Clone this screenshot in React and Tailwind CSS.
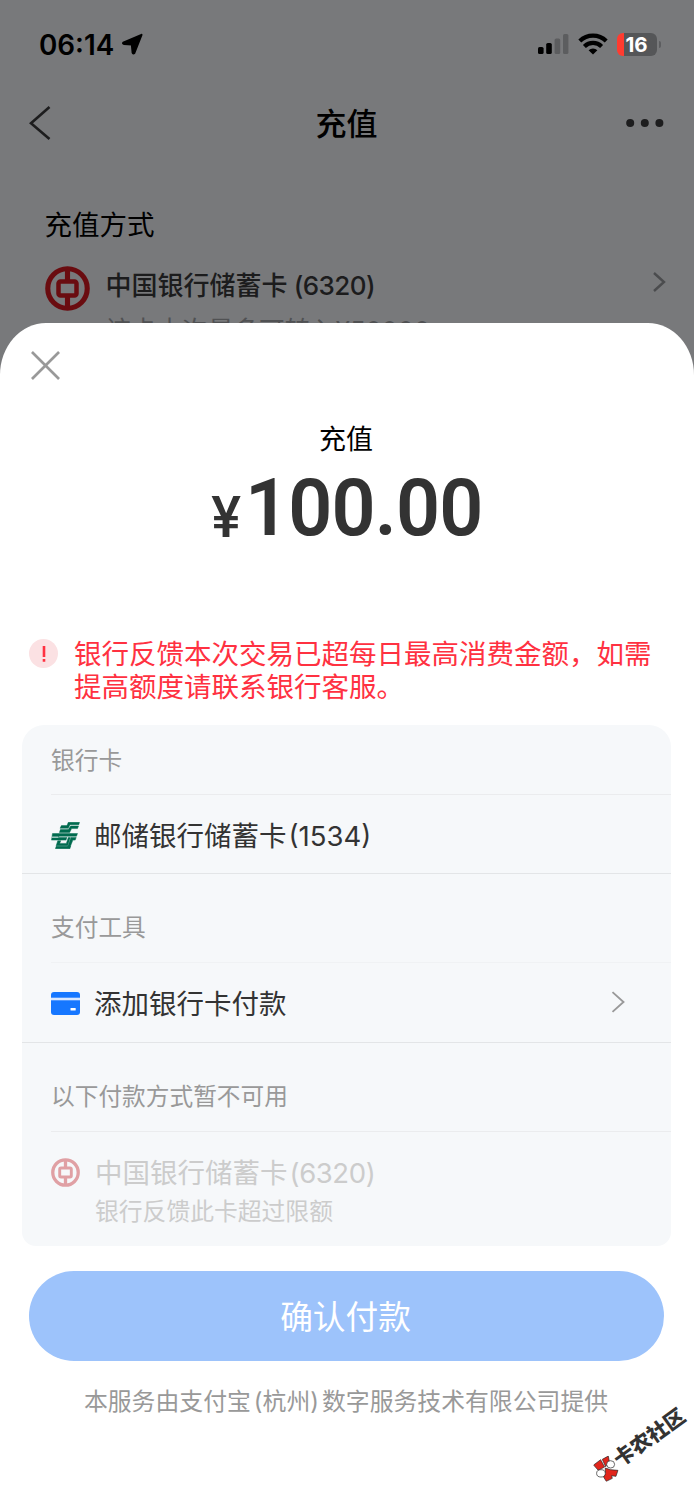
import React from "react";

function BocLogo({ className, color }) {
  return (
    <svg viewBox="0 0 44 44" className={className} fill="none" stroke={color}>
      <circle cx="22" cy="22" r="19.3" strokeWidth="5" />
      <rect x="13.2" y="15.2" width="17.6" height="13.6" rx="2" strokeWidth="4.4" />
      <path d="M22 3v11M22 30v11" strokeWidth="5" />
    </svg>
  );
}

function PostLogo() {
  return (
    <svg viewBox="0 0 87 82" className="h-[27px] w-[29px] shrink-0" fill="#006b4f" stroke="#006b4f" strokeWidth="1.4">
      <path d="M52 1H86L84 8H57L52 19H27L31 11H48z" />
      <path d="M59 12H83L80 20H62L56 32H25L28 23H52z" />
      <path d="M4 35H80L77 43H24L22 47H48L45 55H1z" />
      <path d="M60 47H76L73 55H66L58 75H50z" />
      <path d="M20 57H29L26 65H46L52 47H58L50 72H15z" />
      <path d="M15 74H59L57 81H13z" />
      <path d="M2 46H22" stroke="#f6f8fa" strokeWidth="3" />
    </svg>
  );
}

function Chevron({ className, color, width = 2 }) {
  return (
    <svg viewBox="0 0 12 20" className={className} fill="none" stroke={color} strokeWidth={width}>
      <path d="M1 1l10 9-10 9" />
    </svg>
  );
}

function StatusBar() {
  return (
    <div className="flex h-[88px] items-center justify-between pr-[33px] pl-[39px]">
      <div className="flex items-center text-black">
        <span className="w-[76px] pt-[2px] text-[27.8px] leading-[30px] font-semibold">06:14</span>
        <svg viewBox="0 0 22 22" className="ml-[6px] h-[22px] w-[22px]">
          <path d="M20.5 1.8 2.2 9.6Q1.6 10.8 3 10.9L10.8 11.4 11.6 19.6Q12.2 21.2 13.4 20z" fill="#000" stroke="#000" strokeWidth="2" strokeLinejoin="round" />
        </svg>
      </div>
      <div className="flex items-center">
        <svg viewBox="0 0 31 20" className="h-5 w-[31px]">
          <rect x="0" y="13" width="5.6" height="7" rx="1.6" />
          <rect x="8.2" y="9" width="5.6" height="11" rx="1.6" />
          <rect x="16.6" y="4.4" width="5.6" height="15.6" rx="1.6" fill="#5c5d5f" />
          <rect x="25" y="0" width="5.4" height="20" rx="1.6" fill="#5c5d5f" />
        </svg>
        <svg viewBox="0 0 30 22" className="ml-[9px] h-[22px] w-[30px]" fill="none" stroke="#000" strokeWidth="4.2">
          <path d="M1.8 8a19 19 0 0 1 26.4 0" />
          <path d="M6.4 13.4a12.2 12.2 0 0 1 17.2 0" />
          <path d="M10.6 17.2a6.3 6.3 0 0 1 8.8 0L15 21.6z" fill="#000" stroke="none" />
        </svg>
        <div className="ml-[9px] flex h-[23px] w-10 items-center justify-center overflow-hidden rounded-[6px] bg-linear-to-r from-[#ff3b30] from-[6.5px] to-[#555658] to-[6.5px] pr-[1px]">
          <span className="text-[20.5px] leading-[23px] font-bold text-white">16</span>
        </div>
        <div className="ml-[2px] h-[7px] w-[2px] rounded-r-full bg-[#5c5d5f]" />
      </div>
    </div>
  );
}

function Backdrop() {
  return (
    <div className="h-[323px] shrink-0 overflow-hidden">
      <StatusBar />
      <div className="flex h-[70px] items-center justify-between pr-[30px] pl-[29px]">
        <svg viewBox="0 0 22 34" className="h-[34px] w-[38px]" fill="none" stroke="#1d1d1e" strokeWidth="2.6" preserveAspectRatio="xMinYMid">
          <path d="M20.5 1 2 17.2 20.5 33" />
        </svg>
        <h1 className="pt-px text-[31px] leading-[40px] font-medium text-black">充值</h1>
        <svg viewBox="0 0 38 8" className="h-2 w-[38px]" fill="#1d1d1e">
          <circle cx="4.2" cy="4" r="4" />
          <circle cx="18.8" cy="4" r="4" />
          <circle cx="33.4" cy="4" r="4" />
        </svg>
      </div>
      <div className="pt-[47px] pl-[44.5px]">
        <h2 className="text-[27.5px] leading-[40px] text-black">充值方式</h2>
        <div className="mt-[20px] flex">
          <BocLogo className="mt-[1px] h-[45px] w-[45px] shrink-0" color="#6a0c10" />
          <div className="ml-4 flex-1">
            <div className="pt-px text-[26px] leading-[40px] font-medium text-[#1c1c1d]">
              中国银行储蓄卡<span className="tracking-[-0.6px]"> (6320)</span>
            </div>
            <div className="mt-[5px] text-[25.6px] leading-[40px] text-[#505153]">该卡本次最多可转入¥50000</div>
          </div>
          <Chevron className="mt-[7px] mr-[28px] h-5 w-[14px]" color="#4b4c4e" width={2.4} />
        </div>
      </div>
    </div>
  );
}

function SectionTitle({ children, className }) {
  return (
    <div className={"ml-[29px] flex border-b text-[23.7px] leading-[30px] text-[#999] " + className}>
      {children}
    </div>
  );
}

function PaymentMethods() {
  return (
    <div className="mr-[23px] ml-[22px] h-[521px] rounded-t-[22px] rounded-b-[14px] bg-[#f6f8fa] text-[27.5px] text-[#333]">
      <SectionTitle className="h-[70px] border-[#ebecee] pt-[21px]">银行卡</SectionTitle>
      <div className="flex h-[79px] items-center gap-[14px] border-b border-[#e3e5e7] pt-[3px] pl-[29px]">
        <PostLogo />
        <span className="pt-[3px]">邮储银行储蓄卡<span className="ml-[2px]">(1534)</span></span>
      </div>
      <SectionTitle className="h-[89px] border-[#f0f2f4] pt-[39px]">支付工具</SectionTitle>
      <div className="flex h-20 items-center border-b border-[#e3e5e7] pt-[1px] pr-[46px] pl-[29px]">
        <svg viewBox="0 0 29 23" className="mr-[14px] h-[23px] w-[29px]">
          <rect width="29" height="23" rx="3" fill="#1677ff" />
          <path d="M0 7h29" stroke="#d9e8ff" strokeWidth="2.6" />
          <rect x="19.5" y="16" width="5.2" height="2.4" rx=".5" fill="#fff" />
        </svg>
        <span className="pt-[3px]">添加银行卡付款</span>
        <Chevron className="mb-[3px] ml-auto h-[22px] w-[14px]" color="#999" width={1.7} />
      </div>
      <SectionTitle className="h-[89px] border-[#ebecee] pt-[39px]">以下付款方式暂不可用</SectionTitle>
      <div className="flex pt-[21px] pl-[29px] text-[#ccc]">
        <BocLogo className="mt-[5px] h-[29px] w-[29px]" color="#e0a0a4" />
        <div className="ml-[15px]">
          <div className="leading-[40px]">中国银行储蓄卡<span className="ml-[2px] tracking-[-0.4px]">(6320)</span></div>
          <div className="mt-[3px] text-[23.8px] leading-[32px]">银行反馈此卡超过限额</div>
        </div>
      </div>
    </div>
  );
}

function Watermark() {
  return (
    <div className="absolute top-[1433px] left-[584px] flex w-[108px] origin-center rotate-[-35.6deg] items-center">
      <svg viewBox="0 0 78 78" className="mr-[-1px] ml-[2px] h-[26px] w-[26px] shrink-0 rotate-[35.6deg]" stroke="#222" strokeWidth="2">
        <path d="M1 28 22 12 34 34 15 44z" fill="#e1251b" />
        <path d="M27 11 45 1 48 16 37 33z" fill="#e1251b" />
        <path d="M36 37 52 42 74 44 68 62 55 60 57 68 39 77 31 64 36 52z" fill="#e1251b" />
        <ellipse cx="52" cy="26" rx="12" ry="11" fill="#fff" />
        <ellipse cx="23" cy="53" rx="13" ry="11" fill="#fff" />
      </svg>
      <span className="text-[20.6px] leading-[24px] font-black whitespace-nowrap text-[#333]">卡农社区</span>
    </div>
  );
}

export default function App() {
  return (
    <div className="relative flex h-[1500px] w-[694px] flex-col overflow-hidden bg-[#78797b] font-[Inter,'Noto_Sans_CJK_SC',sans-serif]">
      <Backdrop />
      <div className="flex flex-1 flex-col rounded-t-[46px_52px] bg-white">
        <svg viewBox="0 0 30 30" className="mt-[28px] ml-[31px] h-[29px] w-[29px] shrink-0" stroke="#999" strokeWidth="2.8">
          <path d="M1 1l28 28M29 1L1 29" />
        </svg>
        <div className="mt-[40px] pr-[2px] text-center text-[27px] leading-[40px] text-black">充值</div>
        <div className="flex h-20 scale-x-[0.965] items-baseline justify-center font-[Roboto,sans-serif] font-medium text-[#333]">
          <span className="mr-[4px] translate-y-[2px] text-[58px] leading-[80px]">¥</span>
          <span className="text-[80px] leading-[97px] font-semibold tracking-[-0.8px]">100.00</span>
        </div>
        <div className="mt-[95px] mb-[22px] flex h-[68px] pl-[29px]">
          <div className="mt-[4px] flex h-[29px] w-[29px] items-center justify-center rounded-full bg-[#fbe1e3]">
            <svg viewBox="0 0 4 16" className="h-4 w-1" fill="#ff3141">
              <path d="M.7 0h2.6v11H.7zM.7 13h2.6v2.7H.7z" />
            </svg>
          </div>
          <p className="ml-4 pt-[3px] text-[27.5px] leading-[33px] whitespace-nowrap text-[#ff3141]">
            银行反馈本次交易已超每日最高消费金额，如需
            <br />
            提高额度请联系银行客服。
          </p>
        </div>
        <PaymentMethods />
        <button className="mt-[25px] ml-[29px] h-[90px] w-[635px] shrink-0 rounded-full bg-[#9dc3fb] pt-[4px] pr-[2px] text-[32.7px] text-white">确认付款</button>
        <p className="mt-[25px] pr-[2px] text-center text-[23.85px] leading-[32px] whitespace-nowrap text-[#999]">
          本服务由支付宝<span className="mx-[3px]">(杭州)</span>数字服务技术有限公司提供
        </p>
      </div>
      <Watermark />
    </div>
  );
}
